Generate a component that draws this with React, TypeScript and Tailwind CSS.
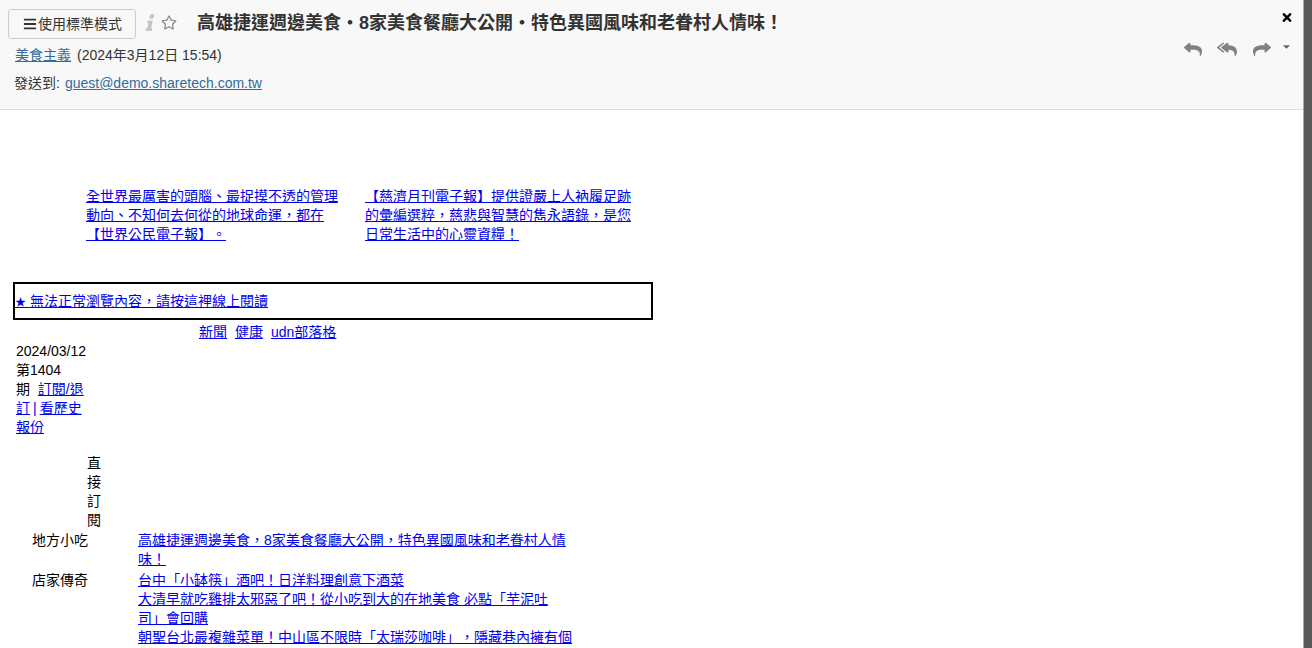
import { FaBars, FaCaretDown, FaInfo, FaRegStar, FaTimes } from 'react-icons/fa'

const font = "font-['Liberation_Sans','Noto_Sans_CJK_TC',sans-serif]"
const link = 'text-[#0000ee] underline'

function ArticleLinks({ label, items }: { label: string; items: string[] }) {
  return (
    <div className="flex">
      <div className="w-[138px] shrink-0 pl-[32px] text-black">{label}</div>
      <div className="w-[436px]">
        {items.map(item => (
          <div key={item}>
            <a href="#" className={link}>{item}</a>
          </div>
        ))}
      </div>
    </div>
  )
}

function MailIcon({ d, className }: { d: string; className: string }) {
  return (
    <svg viewBox="0 128 1792 1472" preserveAspectRatio="none" fill="currentColor" className={className}>
      <path d={d} />
    </svg>
  )
}

const REPLY = 'M1792 1120q0 166-127 451-3 7-10.5 24t-13.5 30-13 22q-12 17-28 17-15 0-23.5-10t-8.5-25q0-9 2.5-26.5t2.5-23.5q5-68 5-123 0-101-17.5-181t-48.5-138.5-80-101-105.5-69.5-133-42.5-154-21.5-175.5-6h-224v256q0 26-19 45t-45 19-45-19l-512-512q-19-19-19-45t19-45l512-512q19-19 45-19t45 19 19 45v256h224q713 0 875 403 53 134 53 333z'
const REPLY_ALL = 'M640 1082v70q0 42-39 59-13 5-25 5-27 0-45-19l-512-512q-19-19-19-45t19-45l512-512q29-31 70-14 39 17 39 59v69l-397 398q-19 19-19 45t19 45zm1152 38q0 58-17 133.5t-38.5 138-48 125-40.5 90.5l-20 40q-8 17-28 17-6 0-9-1-25-8-23-34 43-400-106-565-64-71-170.5-110.5t-267.5-52.5v251q0 42-39 59-13 5-25 5-27 0-45-19l-512-512q-19-19-19-45t19-45l512-512q29-31 70-14 39 17 39 59v262q411 28 599 221 169 173 169 509z'
const FORWARD = 'M1792 640q0 26-19 45l-512 512q-19 19-45 19t-45-19-19-45v-256h-224q-98 0-175.5 6t-154 21.5-133 42.5-105.5 69.5-80 101-48.5 138.5-17.5 181q0 55 5 123 0 6 2.5 23.5t2.5 26.5q0 15-8.5 25t-23.5 10q-16 0-28-17-7-9-13-22t-13.5-30-10.5-24q-127-285-127-451 0-199 53-333 162-403 875-403h224v-256q0-26 19-45t45-19 45 19l512 512q19 19 19 45z'

export default function App() {
  return (
    <div className={`flex h-[648px] w-[1312px] overflow-hidden bg-white [text-spacing-trim:space-all] ${font}`}>
      <main className="min-w-0 flex-1 border-r border-[#a8a8a8]">
        {/* Header */}
        <header className="flex h-[110px] justify-between border-b border-[#dddddd] bg-[#f8f8f8] text-[#333333]">
          <div className="pl-[8px] pt-[9px]">
            <div className="flex items-center">
              <button className="flex h-[30px] w-[128px] items-center justify-center rounded-[3px] border border-[#cccccc] bg-[#f8f8f8] text-[14px] text-[#333333]">
                <FaBars className="ml-[1px] mr-[1px] h-[14px] w-[14px]" />
                使用標準模式
              </button>
              <FaInfo className="mb-[4px] ml-[8px] h-[17px] w-[13px] -skew-x-12 text-[#c4c4c4]" />
              <FaRegStar className="mb-[4px] ml-[4px] h-[15px] w-[16px] text-[#8f8f8f]" />
              <h1 className="mb-[2px] ml-[20px] whitespace-nowrap text-[18px] font-bold leading-[28px]">
                高雄捷運週邊美食‧8家美食餐廳大公開‧特色異國風味和老眷村人情味！
              </h1>
            </div>
            <div className="mt-[6px] pl-[7px] text-[14px] leading-[20px]">
              <a href="#" className="text-[#336b9b] underline">美食主義</a>
              <span className="ml-[6px]">(2024年3月12日 15:54)</span>
            </div>
            <div className="mt-[8px] pl-[6px] text-[14px] leading-[20px]">
              發送到:
              <a href="#" className="ml-[5px] text-[#336b9b] underline">guest@demo.sharetech.com.tw</a>
            </div>
          </div>
          <div className="flex flex-col items-end pr-[12px] pt-[11px]">
            <FaTimes className="-mr-[2px] h-[13px] w-[12px] text-black" />
            <div className="mt-[15px] flex h-[20px] items-center text-[#808080]">
              <MailIcon d={REPLY} className="h-[13px] w-[18px]" />
              <MailIcon d={REPLY_ALL} className="ml-[15px] h-[13px] w-[20px]" />
              <MailIcon d={FORWARD} className="ml-[16px] h-[13px] w-[18px]" />
              <FaCaretDown className="mb-[5px] ml-[11px] h-[11px] w-[9px] text-[#666666]" />
            </div>
          </div>
        </header>

        {/* Mail body */}
        <div className="text-[14px] leading-[19px] text-black">
          <div className="flex pl-[86px] pt-[77px]">
            <a href="#" className={`w-[279px] pr-[24px] ${link}`}>
              全世界最厲害的頭腦、最捉摸不透的管理動向、不知何去何從的地球命運，都在【世界公民電子報】。
            </a>
            <a href="#" className={`w-[270px] ${link}`}>
              【慈濟月刊電子報】提供證嚴上人衲履足跡的彙編選粹，慈悲與智慧的雋永語錄，是您日常生活中的心靈資糧！
            </a>
          </div>

          <div className="ml-[13px] mt-[38px] flex h-[38px] w-[640px] items-center border-2 border-black pt-[2px]">
            <a href="#" className={link}>
              <span className="text-[11px]">★</span> 無法正常瀏覽內容，請按這裡線上閱讀
            </a>
          </div>

          <div className="mt-[3px] flex gap-[8px] pl-[199px]">
            <a href="#" className={link}>新聞</a>
            <a href="#" className={link}>健康</a>
            <a href="#" className={link}>udn部落格</a>
          </div>

          <div className="ml-[16px] w-[70px]">
            <div>2024/03/12</div>
            <div>
              第1404<br />
              期 &nbsp;<a href="#" className={link}>訂閱/退<br />訂</a>
              <span className="mx-[3px] text-[#0000ee]">|</span>
              <a href="#" className={link}>看歷史<br />報份</a>
            </div>
          </div>

          <div className="ml-[87px] mt-[17px] w-[14px]">直接訂閱</div>

          <div className="mt-[1px]">
            <ArticleLinks label="地方小吃" items={['高雄捷運週邊美食，8家美食餐廳大公開，特色異國風味和老眷村人情味！']} />
            <div className="mt-[2px]">
              <ArticleLinks
                label="店家傳奇"
                items={[
                  '台中「小缽筷」酒吧！日洋料理創意下酒菜',
                  '大清早就吃雞排太邪惡了吧！從小吃到大的在地美食 必點「芋泥吐司」會回購',
                  '朝聖台北最複雜菜單！中山區不限時「太瑞莎咖啡」，隱藏巷內擁有個',
                ]}
              />
            </div>
          </div>
        </div>
      </main>
      <aside className="w-[8px] shrink-0 bg-[#5a5957]" />
    </div>
  )
}
